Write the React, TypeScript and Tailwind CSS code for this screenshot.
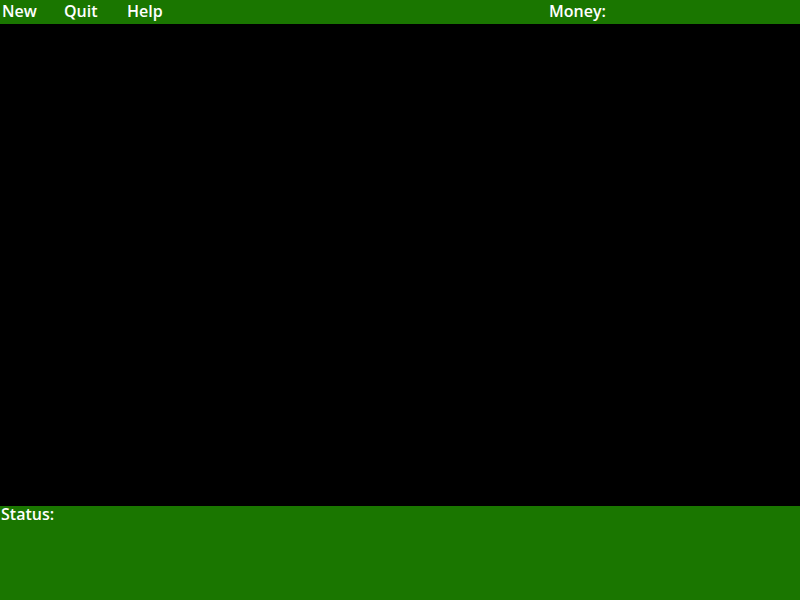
import React from "react";

export default function App() {
  return (
    <div className="flex h-[600px] w-[800px] flex-col bg-black text-white" style={{ fontFamily: '"Open Sans", "Noto Sans", sans-serif' }}>
      <div className="flex h-[24px] items-start bg-[#1a7600] pt-[3px] text-[16px] font-semibold leading-[16px]">
        <span className="ml-[2px] w-[62px]">New</span>
        <span className="w-[63px]">Quit</span>
        <span className="w-[422px]">Help</span>
        <span>Money:</span>
      </div>
      <div className="flex-1 bg-black" />
      <div className="h-[94px] bg-[#1a7600] pl-[1px] pt-[2px] text-[16px] font-semibold leading-[12px]">Status:</div>
    </div>
  );
}
